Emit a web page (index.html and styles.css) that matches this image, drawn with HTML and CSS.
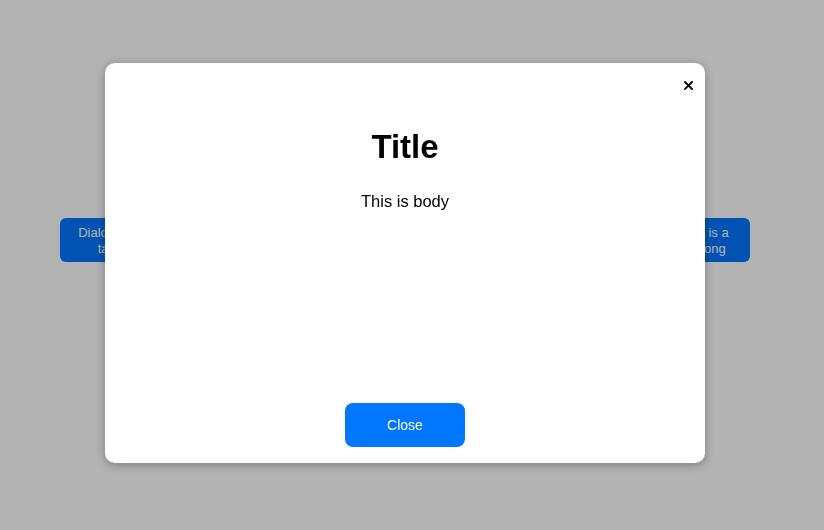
FILE: index.html
```html
<!DOCTYPE html>
<html>
<head>
<meta charset="utf-8">
<link rel="stylesheet" href="styles.css">
</head>
<body>
<div class="page">
  <button class="trigger trigger-left">Dialog with tabs</button>
  <button class="trigger trigger-right">Content is a<br>bit too long</button>
</div>
<div class="overlay">
  <div class="dialog">
    <button class="close-x" aria-label="close">
      <svg width="9" height="9" viewBox="0 0 9 9"><path d="M1 1L8 8M8 1L1 8" stroke="#000" stroke-width="1.8" stroke-linecap="square"/></svg>
    </button>
    <h1 class="title">Title</h1>
    <p class="body-text">This is body</p>
    <button class="close-btn">Close</button>
  </div>
</div>
</body>
</html>
```
FILE: styles.css
```css
* { box-sizing: border-box; }
html, body { margin: 0; height: 100%; }
body {
  font-family: "Liberation Sans", Arial, sans-serif;
  background: #fff;
}
.page {
  height: 530px;
  display: flex;
  justify-content: space-between;
  align-items: flex-start;
  padding: 218px 74px 0 60px;
}
.trigger {
  border: none;
  background: #0077ff;
  color: #fff;
  font-family: inherit;
  font-size: 13px;
  line-height: 16px;
  border-radius: 6px;
  height: 44px;
  padding: 7px 16px 5px;
  text-align: center;
}
.trigger-left { width: 100px; }
.trigger-right { width: 130px; padding: 7px 4px 5px 22px; }
.overlay {
  position: fixed;
  inset: 0;
  background: rgba(0, 0, 0, 0.3);
  display: flex;
  align-items: center;
  justify-content: center;
}
.dialog {
  position: relative;
  width: 600px;
  height: 400px;
  margin: 0 14px 4px 0;
  background: #fff;
  border-radius: 10px;
  box-shadow: 0 2px 10px rgba(0, 0, 0, 0.3);
  display: flex;
  flex-direction: column;
  align-items: center;
  padding: 64px 24px 16px;
}
.close-x {
  position: absolute;
  top: 18px;
  right: 12px;
  width: 9px;
  height: 9px;
  padding: 0;
  border: none;
  background: none;
  display: flex;
}
.title {
  margin: 0;
  font-size: 33px;
  line-height: 40px;
  font-weight: bold;
  color: #000;
}
.body-text {
  margin: 22px 0 0;
  font-size: 16.5px;
  line-height: 24px;
  color: #000;
}
.close-btn {
  margin-top: auto;
  width: 120px;
  height: 44px;
  border: none;
  border-radius: 8px;
  background: #0077ff;
  color: #fff;
  font-family: inherit;
  font-size: 14px;
  font-weight: 500;
}
```
